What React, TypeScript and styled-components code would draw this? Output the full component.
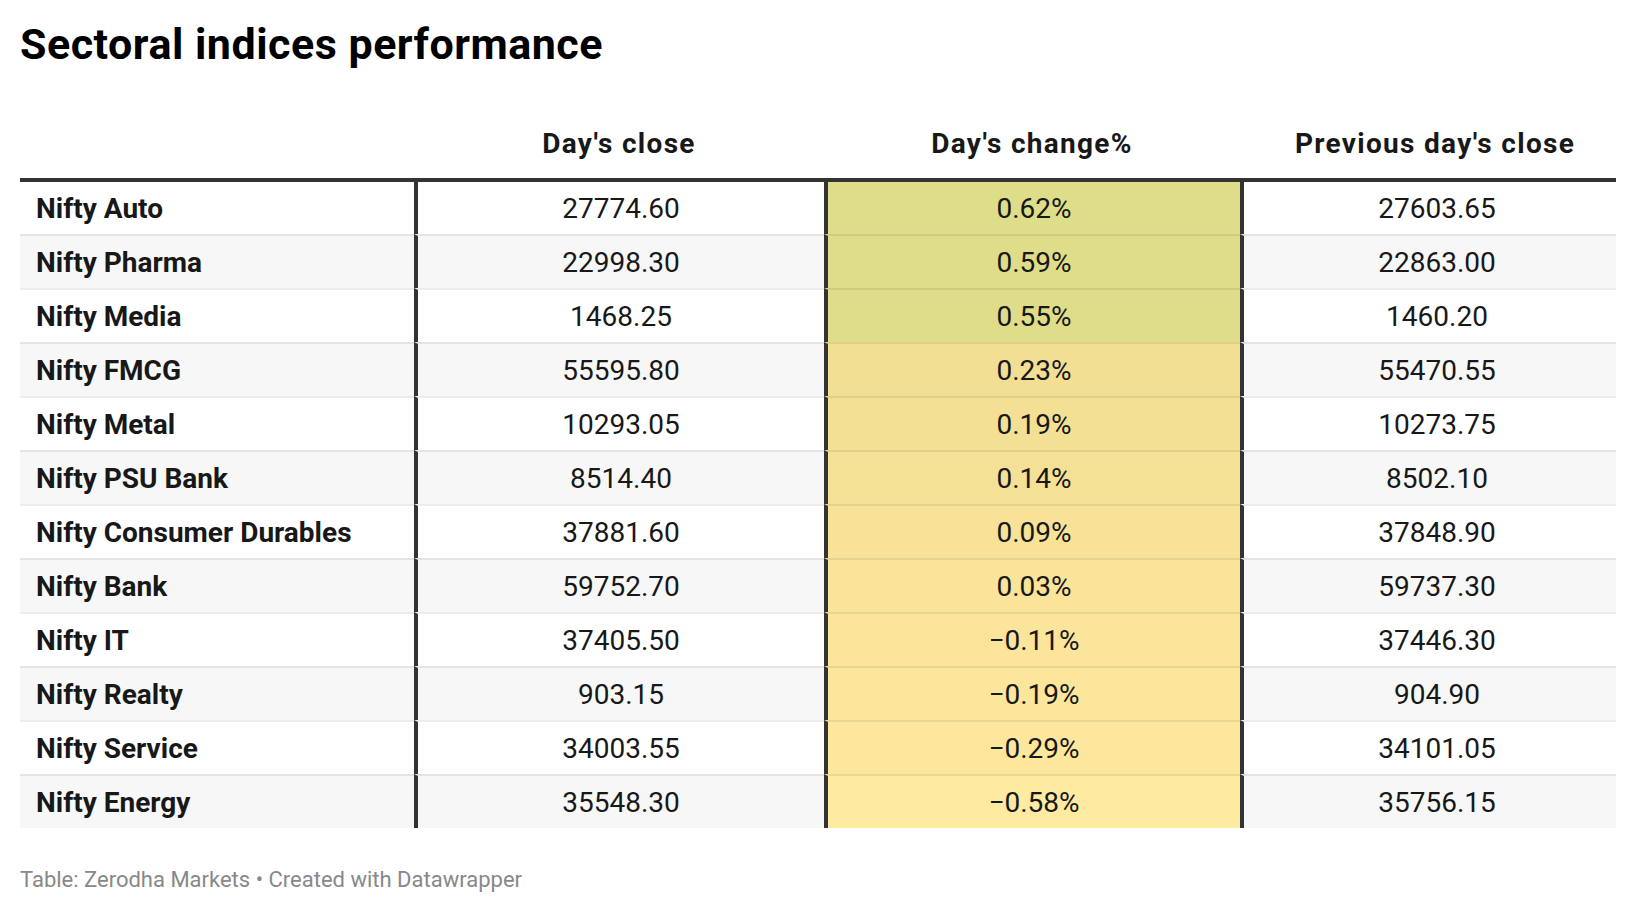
import React, { FC } from "react";
import styled, { createGlobalStyle } from "styled-components";

interface IndexRow {
  name: string;
  close: string;
  change: string;
  prev: string;
  heat: string;
}

const rows: IndexRow[] = [
  { name: "Nifty Auto", close: "27774.60", change: "0.62%", prev: "27603.65", heat: "#dedd89" },
  { name: "Nifty Pharma", close: "22998.30", change: "0.59%", prev: "22863.00", heat: "#dfdd89" },
  { name: "Nifty Media", close: "1468.25", change: "0.55%", prev: "1460.20", heat: "#e0dd8a" },
  { name: "Nifty FMCG", close: "55595.80", change: "0.23%", prev: "55470.55", heat: "#f2df93" },
  { name: "Nifty Metal", close: "10293.05", change: "0.19%", prev: "10273.75", heat: "#f3e094" },
  { name: "Nifty PSU Bank", close: "8514.40", change: "0.14%", prev: "8502.10", heat: "#f5e196" },
  { name: "Nifty Consumer Durables", close: "37881.60", change: "0.09%", prev: "37848.90", heat: "#f7e297" },
  { name: "Nifty Bank", close: "59752.70", change: "0.03%", prev: "59737.30", heat: "#f9e499" },
  { name: "Nifty IT", close: "37405.50", change: "\u22120.11%", prev: "37446.30", heat: "#fbe59b" },
  { name: "Nifty Realty", close: "903.15", change: "\u22120.19%", prev: "904.90", heat: "#fce69c" },
  { name: "Nifty Service", close: "34003.55", change: "\u22120.29%", prev: "34101.05", heat: "#fde79d" },
  { name: "Nifty Energy", close: "35548.30", change: "\u22120.58%", prev: "35756.15", heat: "#feeaa0" },
];

const App: FC = () => {
  return (
    <Page>
      <GlobalStyle />
      <Title>Sectoral indices performance</Title>

      <Table>
        <HeadRow>
          <HeadCell />
          <HeadCell>Day's close</HeadCell>
          <HeadCell>Day's change%</HeadCell>
          <HeadCell $last>Previous day's close</HeadCell>
        </HeadRow>

        {rows.map((r, i) => (
          <Row key={r.name} $striped={i % 2 === 1}>
            <NameCell $first={i === 0}>{r.name}</NameCell>
            <NumCell $first={i === 0}>{r.close}</NumCell>
            <NumCell $first={i === 0} $heat={r.heat}>
              {r.change}
            </NumCell>
            <NumCell $first={i === 0} $last>
              {r.prev}
            </NumCell>
          </Row>
        ))}
      </Table>

      <Footer>Table: Zerodha Markets • Created with Datawrapper</Footer>
    </Page>
  );
};

export default App;

const GlobalStyle = createGlobalStyle`
  body {
    margin: 0;
    background: #ffffff;
    font-family: Roboto, "Liberation Sans", sans-serif;
    color: #181818;
  }
`;

const Page = styled.div`
  padding: 19px 20px 0 20px;
  width: 1596px;
`;

const Title = styled.h1`
  margin: 0;
  font-size: 43px;
  line-height: 50px;
  font-weight: 700;
  letter-spacing: 0.5px;
  color: #000000;
`;

const COLUMNS = "394px 410px 416px 376px";

const Table = styled.div`
  margin-top: 59px;
  display: flex;
  flex-direction: column;
`;

const HeadRow = styled.div`
  display: grid;
  grid-template-columns: ${COLUMNS};
  border-bottom: 4px solid #333333;
`;

const HeadCell = styled.div<{ $last?: boolean }>`
  padding: 0 ${(p) => (p.$last ? "0" : "14px")} 18px 14px;
  font-size: 28px;
  line-height: 32px;
  font-weight: 700;
  letter-spacing: 1.3px;
  text-align: center;
  white-space: nowrap;
`;

const Row = styled.div<{ $striped: boolean }>`
  display: grid;
  grid-template-columns: ${COLUMNS};
  background: ${(p) => (p.$striped ? "#f7f7f7" : "#ffffff")};
`;

const Cell = styled.div<{ $first?: boolean }>`
  height: 52px;
  display: flex;
  align-items: center;
  font-size: 28px;
  white-space: nowrap;
  border-top: ${(p) => (p.$first ? "0" : "2px solid rgba(0, 0, 0, 0.075)")};
`;

const NameCell = styled(Cell)`
  padding-left: 16px;
  font-weight: 700;
`;

const NumCell = styled(Cell)<{ $heat?: string; $last?: boolean }>`
  justify-content: center;
  padding: 0 ${(p) => (p.$last ? "0" : "14px")} 0 14px;
  border-left: 4px solid #333333;
  background: ${(p) => p.$heat ?? "transparent"};
`;

const Footer = styled.div`
  margin-top: 39px;
  font-size: 22px;
  line-height: 26px;
  color: #888888;
`;
